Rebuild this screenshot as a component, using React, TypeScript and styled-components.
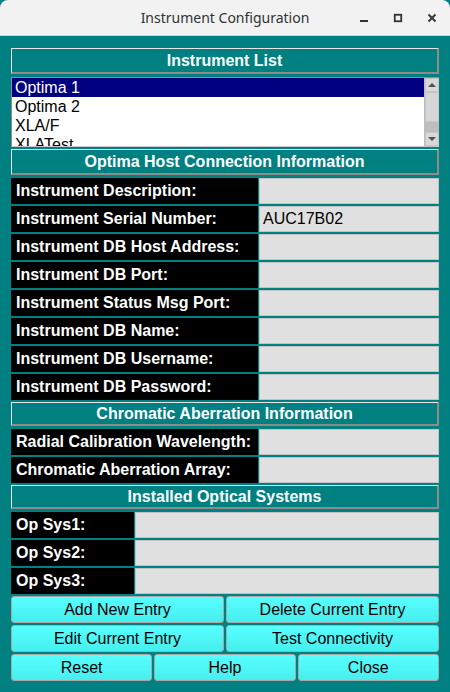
import React from 'react'
import styled, {createGlobalStyle} from 'styled-components'

const TEAL = '#008080'
const FONT = '"Liberation Sans", Arial, sans-serif'

const GlobalStyle = createGlobalStyle`
  html, body {
    margin: 0;
    padding: 0;
    background: ${TEAL};
  }
  * {
    box-sizing: border-box;
  }
`

const instruments = ['Optima 1', 'Optima 2', 'XLA/F', 'XLATest']

const hostFields = [
  {label: 'Instrument Description:', value: ''},
  {label: 'Instrument Serial Number:', value: 'AUC17B02'},
  {label: 'Instrument DB Host Address:', value: ''},
  {label: 'Instrument DB Port:', value: ''},
  {label: 'Instrument Status Msg Port:', value: ''},
  {label: 'Instrument DB Name:', value: ''},
  {label: 'Instrument DB Username:', value: ''},
  {label: 'Instrument DB Password:', value: ''},
]

const chromaticFields = [
  {label: 'Radial Calibration Wavelength:', value: ''},
  {label: 'Chromatic Aberration Array:', value: ''},
]

const opSystems = ['Op Sys1:', 'Op Sys2:', 'Op Sys3:']

const App: React.FC = () => {
  return (
    <>
      <GlobalStyle />
      <Window>
        <TitleBar>
          <Title>Instrument Configuration</Title>
          <WindowControls>
            <svg width="12" height="12" viewBox="0 0 12 12">
              <rect x="2" y="8" width="8" height="2" fill="#2e3436" />
            </svg>
            <svg width="12" height="12" viewBox="0 0 12 12">
              <rect x="2.75" y="2.75" width="6.5" height="6.5" fill="none" stroke="#2e3436" strokeWidth="1.8" />
            </svg>
            <svg width="12" height="12" viewBox="0 0 12 12">
              <path d="M2.5 2.5 L9.5 9.5 M9.5 2.5 L2.5 9.5" stroke="#2e3436" strokeWidth="1.8" />
            </svg>
          </WindowControls>
        </TitleBar>
        <Body>
          <SectionHeader>Instrument List</SectionHeader>
          <ListBox>
            <ListItems>
              {instruments.map((name, i) => (
                <ListItem key={name} selected={i === 0}>
                  {name}
                </ListItem>
              ))}
            </ListItems>
            <ScrollBar>
              <ArrowButton>
                <ArrowUp />
              </ArrowButton>
              <Track>
                <Thumb />
              </Track>
              <ArrowButton>
                <ArrowDown />
              </ArrowButton>
            </ScrollBar>
          </ListBox>

          <SectionHeader>Optima Host Connection Information</SectionHeader>
          {hostFields.map(f => (
            <FieldRow key={f.label} labelWidth={247}>
              <Label>{f.label}</Label>
              <Value>{f.value}</Value>
            </FieldRow>
          ))}

          <SectionHeader compact>Chromatic Aberration Information</SectionHeader>
          {chromaticFields.map(f => (
            <FieldRow key={f.label} labelWidth={247}>
              <Label>{f.label}</Label>
              <Value>{f.value}</Value>
            </FieldRow>
          ))}

          <SectionHeader compact>Installed Optical Systems</SectionHeader>
          {opSystems.map(label => (
            <FieldRow key={label} labelWidth={123}>
              <Label>{label}</Label>
              <Value />
            </FieldRow>
          ))}

          <ButtonRow columns={2}>
            <Button>Add New Entry</Button>
            <Button>Delete Current Entry</Button>
          </ButtonRow>
          <ButtonRow columns={2}>
            <Button>Edit Current Entry</Button>
            <Button>Test Connectivity</Button>
          </ButtonRow>
          <ButtonRow columns={3}>
            <Button>Reset</Button>
            <Button>Help</Button>
            <Button>Close</Button>
          </ButtonRow>
        </Body>
      </Window>
    </>
  )
}

export default App

const Window = styled.div`
  width: 450px;
  height: 692px;
  display: flex;
  flex-direction: column;
  background: ${TEAL};
  font-family: ${FONT};
  overflow: hidden;
`

const TitleBar = styled.div`
  position: relative;
  height: 36px;
  flex: none;
  display: flex;
  align-items: center;
  justify-content: center;
  background: #f2f2f2;
  border-bottom: 1px solid #d6d6d6;
  border-radius: 8px 8px 0 0;
`

const Title = styled.div`
  font-family: "Noto Sans", "DejaVu Sans", sans-serif;
  font-size: 14px;
  color: #2e3436;
`

const WindowControls = styled.div`
  position: absolute;
  right: 12px;
  top: 12px;
  display: flex;
  gap: 22px;
  & > svg {
    display: block;
  }
`

const Body = styled.div`
  display: flex;
  flex-direction: column;
  gap: 2px;
  padding: 12px 11px 0 11px;
`

const SectionHeader = styled.div<{compact?: boolean}>`
  height: ${props => (props.compact ? 24 : 26)}px;
  margin-bottom: 1px;
  display: flex;
  align-items: center;
  justify-content: center;
  background: ${TEAL};
  color: #ffffff;
  font-weight: bold;
  font-size: 16px;
  border-style: solid;
  border-width: 1px 2px 2px 1px;
  border-color: #e6e6e6 #8c8c8c #8c8c8c #e6e6e6;
`

const ListBox = styled.div`
  height: 70px;
  display: flex;
  background: #ffffff;
  border-top: 1px solid #8c8c8c;
  border-left: 1px solid #8c8c8c;
  border-bottom: 1px solid #c8c8c8;
`

const ListItems = styled.div`
  flex: 1;
  overflow: hidden;
`

const ListItem = styled.div<{selected?: boolean}>`
  height: 19px;
  line-height: 19px;
  padding-left: 3px;
  font-size: 16px;
  color: ${props => (props.selected ? '#ffffff' : '#000000')};
  background: ${props => (props.selected ? '#000080' : 'transparent')};
`

const ScrollBar = styled.div`
  width: 15px;
  display: flex;
  flex-direction: column;
  background: #d2d2d2;
  border-left: 1px solid #bdbdbd;
`

const ArrowButton = styled.div`
  height: 14px;
  flex: none;
  display: flex;
  align-items: center;
  justify-content: center;
  background: #d8d8d8;
  border: 1px solid #c4c4c4;
`

const ArrowUp = styled.div`
  width: 0;
  height: 0;
  border-left: 4px solid transparent;
  border-right: 4px solid transparent;
  border-bottom: 4px solid #505050;
`

const ArrowDown = styled.div`
  width: 0;
  height: 0;
  border-left: 4px solid transparent;
  border-right: 4px solid transparent;
  border-top: 4px solid #505050;
`

const Track = styled.div`
  flex: 1;
  background: #bdbdbd;
  display: flex;
  flex-direction: column;
`

const Thumb = styled.div`
  height: 30px;
  background: #d6d6d6;
  border: 1px solid #c6c6c6;
`

const FieldRow = styled.div<{labelWidth: number}>`
  height: 26px;
  display: grid;
  grid-template-columns: ${props => props.labelWidth}px 1fr;
  gap: 1px;
`

const Label = styled.div`
  background: #000000;
  color: #ffffff;
  font-weight: bold;
  font-size: 16px;
  display: flex;
  align-items: center;
  padding-left: 5px;
  white-space: nowrap;
`

const Value = styled.div`
  background: #e0e0e0;
  border: 1px solid #c2c2c2;
  color: #000000;
  font-size: 16px;
  display: flex;
  align-items: center;
  padding-left: 3px;
`

const ButtonRow = styled.div<{columns: number}>`
  display: grid;
  grid-template-columns: repeat(${props => props.columns}, 1fr);
  gap: 2px;
`

const Button = styled.button`
  height: 27px;
  font-family: ${FONT};
  font-size: 16px;
  color: #000000;
  background: linear-gradient(#59ffff, #46eeee);
  border: 1px solid #a8a8a8;
  border-radius: 3px;
  padding: 0;
  cursor: pointer;
`
